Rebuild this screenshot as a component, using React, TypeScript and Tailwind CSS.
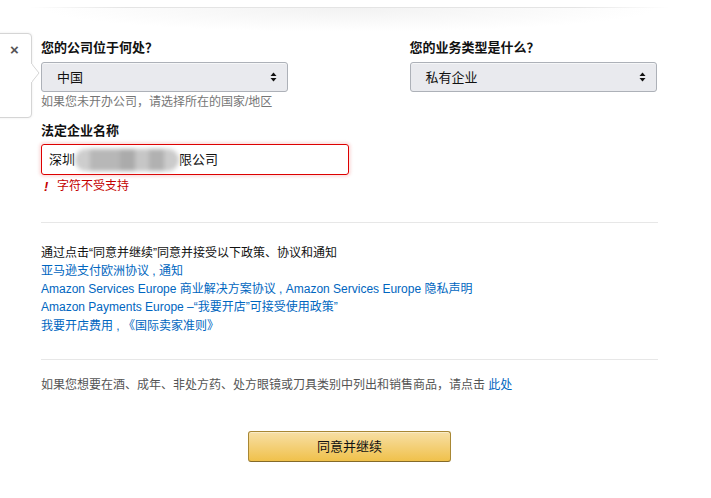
import { useState } from 'react';

const FONT = "font-['Liberation_Sans','Noto_Sans_CJK_SC',sans-serif]";

function SelectArrows() {
  return (
    <svg width="7" height="10" viewBox="0 0 7 10" className="shrink-0">
      <path d="M3.5 0.5 L6.5 4 L0.5 4 Z" fill="#111" />
      <path d="M0.5 6 L6.5 6 L3.5 9.5 Z" fill="#111" />
    </svg>
  );
}

function FakeSelect({ value }: { value: string }) {
  return (
    <div className="flex h-[30px] w-[247px] items-center justify-between rounded-[3px] border border-[#adb1b8] bg-[#e9eaee] pl-[15px] pr-[10px] text-[13px] text-[#111] shadow-[0_1px_0_rgba(255,255,255,0.6)_inset]">
      <span>{value}</span>
      <SelectArrows />
    </div>
  );
}

export default function App() {
  const [name] = useState({ head: '深圳', tail: '限公司' });

  return (
    <div className={`relative h-[498px] w-[711px] overflow-hidden bg-white ${FONT}`}>
      {/* shadow from the header above */}
      <div className="absolute left-[30px] top-[7px] h-px w-[640px] bg-[linear-gradient(to_right,transparent,#e4e4e4_15%,#e4e4e4_85%,transparent)]" />
      <div className="absolute left-[40px] top-[8px] h-[24px] w-[620px] bg-[radial-gradient(ellipse_at_top,#f2f2f2,rgba(255,255,255,0)_70%)]" />

      {/* close popover on the left */}
      <div className="absolute left-[-6px] top-[33px] h-[85px] w-[38px] rounded-[4px] border border-[#d5d5d5] bg-white shadow-[0_0_3px_rgba(0,0,0,0.08)]">
        <span className="absolute left-[15px] top-[8px] text-[15px] font-bold leading-[16px] text-[#555]">×</span>
        <svg width="10" height="22" viewBox="0 0 10 22" className="absolute left-[36px] top-[29px]">
          <path d="M0 0 L8 10 L0 20" fill="white" stroke="#d5d5d5" strokeWidth="1" />
          <rect x="0" y="1" width="1" height="18" fill="white" />
        </svg>
      </div>

      <div className="pl-[41px] pr-[53px] pt-[39px] text-[12px] leading-[17px] text-[#111]">
        <div className="grid grid-cols-2">
          <div>
            <div className="text-[13px] font-bold">您的公司位于何处？</div>
            <div className="mt-[6px]">
              <FakeSelect value="中国" />
            </div>
            <div className="mt-[2px] text-[#767676]">如果您未开办公司，请选择所在的国家/地区</div>
          </div>
          <div className="pl-[60px]">
            <div className="text-[13px] font-bold">您的业务类型是什么？</div>
            <div className="mt-[6px]">
              <FakeSelect value="私有企业" />
            </div>
          </div>
        </div>

        <div className="mt-[11px] text-[13px] font-bold">法定企业名称</div>
        <div className="mt-[5px] flex h-[31px] w-[308px] items-center rounded-[3px] border border-[#d00] pl-[7px] text-[13px] shadow-[0_0_3px_2px_rgba(220,0,0,0.12)]">
          <span>{name.head}</span>
          <span className="relative inline-block h-[22px] w-[104px]">
            <span className="absolute inset-0 flex blur-[2px]">
              <span className="h-full w-[15px] rounded-l-full bg-[#cdcdcd]" />
              <span className="h-full w-[30px] bg-[#b7b7b7]" />
              <span className="h-full w-[15px] bg-[#ababab]" />
              <span className="h-full w-[14px] bg-[#c6c6c6]" />
              <span className="h-full w-[15px] bg-[#b1b1b1]" />
              <span className="h-full w-[15px] rounded-r-full bg-[#cbcbcb]" />
            </span>
          </span>
          <span>{name.tail}</span>
        </div>
        <div className="mt-[3px] flex items-center text-[#c40000]">
          <span className="ml-[3px] w-[13px] text-[13px] italic font-bold">!</span>
          <span>字符不受支持</span>
        </div>

        <div className="mt-[27px] h-px w-[617px] bg-[#e7e7e7]" />

        <div className="mt-[21px] leading-[18px]">
          <div>通过点击“同意并继续”同意并接受以下政策、协议和通知</div>
          <div className="text-[#0066c0]">亚马逊支付欧洲协议 , 通知</div>
          <div className="text-[#0066c0]">Amazon Services Europe 商业解决方案协议 , Amazon Services Europe 隐私声明</div>
          <div className="text-[#0066c0]">Amazon Payments Europe –“我要开店”可接受使用政策”</div>
          <div className="mt-[1px] text-[#0066c0]">我要开店费用 , 《国际卖家准则》</div>
        </div>

        <div className="mt-[24px] h-px w-[617px] bg-[#e7e7e7]" />

        <div className="mt-[17px] text-[#555]">
          如果您想要在酒、成年、非处方药、处方眼镜或刀具类别中列出和销售商品，请点击 <span className="text-[#0066c0]">此处</span>
        </div>

        <div className="mt-[37px] flex w-[617px] justify-center">
          <button className="h-[31px] w-[203px] rounded-[3px] border border-[#a88734] border-b-[#846a29] bg-[linear-gradient(to_bottom,#f7dfa5,#f0c14b)] text-[13px] text-[#111] shadow-[0_1px_0_rgba(255,255,255,0.4)_inset]">
            同意并继续
          </button>
        </div>
      </div>
    </div>
  );
}
